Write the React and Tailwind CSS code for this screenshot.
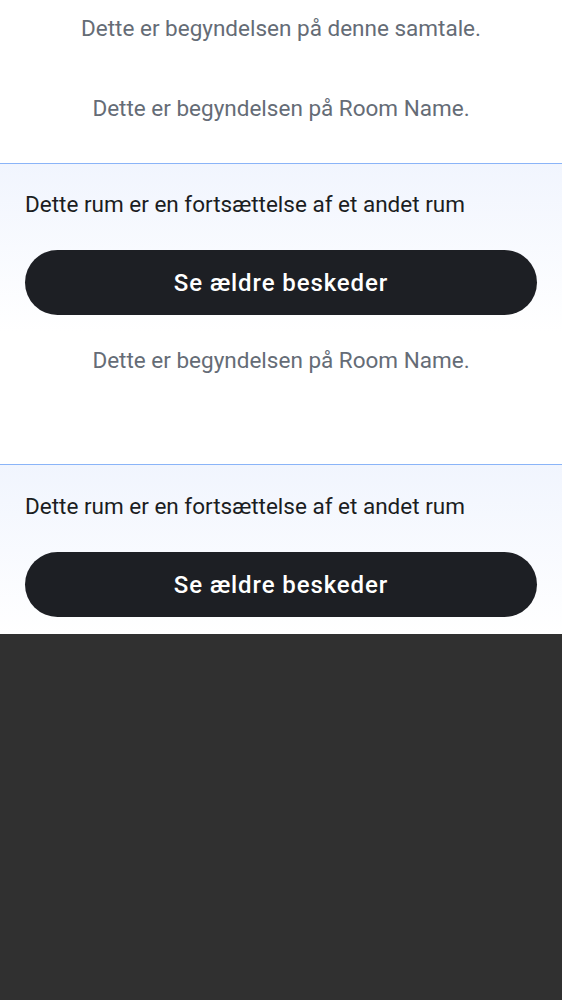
const font = { fontFamily: "Roboto, 'Noto Sans', sans-serif" };

const RoomStart = ({ className = "" }) => (
  <p className={`text-center text-[22.5px] leading-7 text-[#656c76] ${className}`}>
    Dette er begyndelsen på Room Name.
  </p>
);

const Predecessor = ({ className = "pt-[26px]" }) => (
  <div className={`border-t border-[#8ab4f8] bg-gradient-to-b from-[#f1f5fe] to-white px-[25px] pb-[17px] ${className}`}>
    <p className="text-[22.5px] leading-7 text-[#1b1d22]">
      Dette rum er en fortsættelse af et andet rum
    </p>
    <button className="mt-8 flex h-[65px] w-full items-center justify-center rounded-full bg-[#1d1f24] text-[24px] font-medium tracking-[0.9px] text-white">
      Se ældre beskeder
    </button>
  </div>
);

export default function App() {
  return (
    <div className="flex min-h-screen flex-col bg-[#303030]" style={font}>
      <div className="bg-white">
        <p className="pt-[14px] text-center text-[22.5px] leading-7 text-[#656c76]">
          Dette er begyndelsen på denne samtale.
        </p>
        <RoomStart className="mt-[52px] mb-[41px]" />
        <Predecessor />
        <RoomStart className="mt-[14px] mb-[90px]" />
        <Predecessor className="pt-[27px]" />
      </div>
    </div>
  );
}
